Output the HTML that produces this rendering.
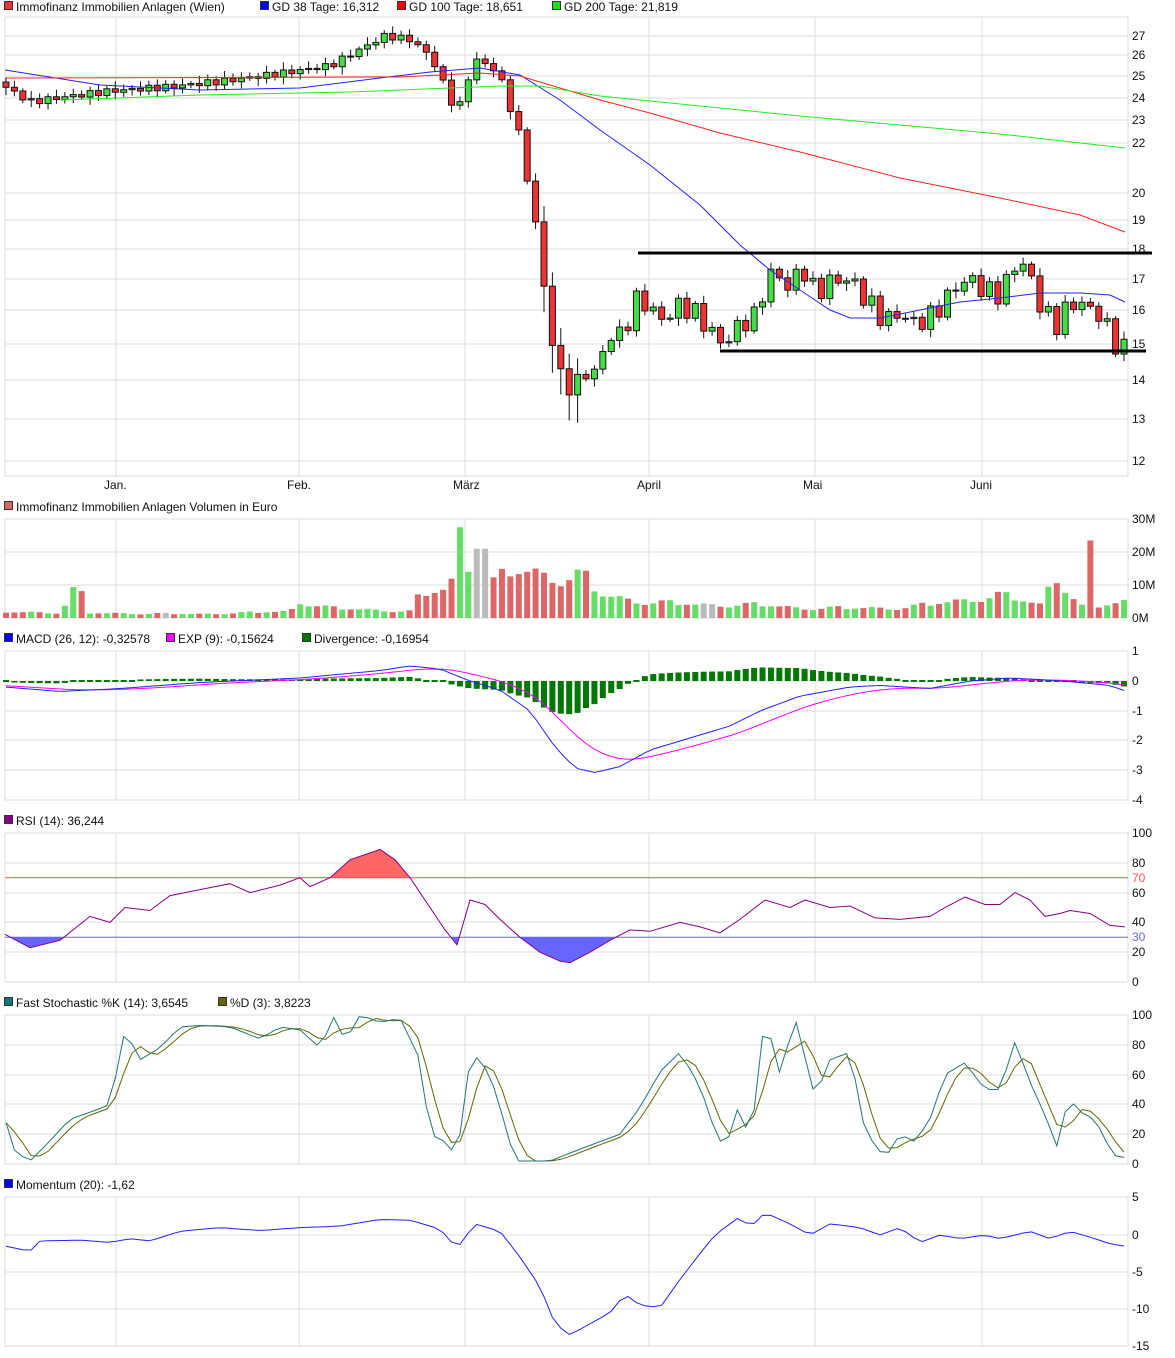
<!DOCTYPE html>
<html><head><meta charset="utf-8"><style>
body{margin:0;background:#fff;width:1175px;height:1358px;overflow:hidden;font-family:"Liberation Sans",sans-serif}
svg{display:block}
text{font-family:"Liberation Sans",sans-serif;font-size:12px;fill:#111}
</style></head><body>
<svg id="s" width="1175" height="1358" xmlns="http://www.w3.org/2000/svg"></svg>
<script>
var o=[];
function I(k,x){for(var i=0;i<k.length-1;i++){if(x<=k[i+1][0]){var a=k[i],b=k[i+1];return a[1]+(b[1]-a[1])*(x-a[0])/(b[0]-a[0]);}}return k[k.length-1][1];}
function L(x1,y1,x2,y2,c,w){o.push('<line x1="'+x1+'" y1="'+y1+'" x2="'+x2+'" y2="'+y2+'" stroke="'+c+'" stroke-width="'+(w||1)+'"/>');}
function R(x,y,w,h,f,s){o.push('<rect x="'+x+'" y="'+y+'" width="'+w+'" height="'+h+'" fill="'+f+'"'+(s?' stroke="'+s+'"':'')+'/>');}
function T(x,y,t,c,a){o.push('<text x="'+x+'" y="'+y+'"'+(c?' style="fill:'+c+'"':'')+'>'+t+'</text>');}
function P(pts,c,w){o.push('<polyline fill="none" stroke="'+c+'" stroke-width="'+(w||1)+'" points="'+pts.map(function(p){return p[0].toFixed(1)+','+p[1].toFixed(1)}).join(' ')+'"/>');}
function leg(items,y){var x=4;items.forEach(function(it){R(x+0.5,y-9.5,8,8,it[1],'#333');T(x+12,y,it[0]);x+=it[2];});}
var MX=[116,299,465,649,815,982],X0=5,X1=1128;
function panel(top,bot,ticks){R(X0,top,X1-X0,bot-top,'none','#ddd');ticks.forEach(function(t){L(X0,t[0],X1,t[0],'#ddd');T(1132,t[0]+4,t[1],t[2]);});MX.forEach(function(x){L(x,top,x,bot,'#ddd');});}
leg([['Immofinanz Immobilien Anlagen (Wien)','#e33',256],['GD 38 Tage: 16,312','#00f',137],['GD 100 Tage: 18,651','#f00',155],['GD 200 Tage: 21,819','#2d2',150]],11);
function py(p){return 1766-525*Math.log(p);}
var mt=[];[27,26,25,24,23,22,20,19,18,17,16,15,14,13,12].forEach(function(v){mt.push([Math.round(py(v)),v]);});
panel(17,476,mt);
[['Jan.',116],['Feb.',299],['März',465],['April',649],['Mai',815],['Juni',982]].forEach(function(m){T(m[1]-12,489,m[0]);});
var pk=[[5,24.5],[30,23.8],[60,24.0],[110,24.3],[170,24.5],[230,24.8],[290,25.2],[330,25.5],[360,26.3],[385,27.0],[410,26.8],[430,26.0],[445,24.5],[457,23.2],[465,24.5],[475,25.8],[490,25.5],[500,25.0],[508,23.8],[516,22.8],[522,22.0],[531,19.5],[540,18.3],[548,15.2],[557,14.8],[566,13.5],[574,14.0],[583,14.2],[590,14.0],[600,14.6],[608,15.2],[623,15.3],[632,16.0],[640,16.5],[650,16.0],[665,15.7],[680,16.2],[700,15.8],[715,15.2],[725,15.0],[740,15.6],[755,15.8],[765,16.8],[775,17.3],[790,16.6],[800,17.4],[808,17.1],[815,16.5],[830,16.9],[850,17.0],[862,16.5],[875,16.0],[885,15.7],[900,15.9],[915,15.6],[930,15.8],[945,16.3],[958,16.8],[970,17.0],[985,16.6],[1000,16.5],[1015,17.4],[1025,17.5],[1040,16.2],[1055,15.5],[1065,16.0],[1080,16.3],[1090,16.0],[1100,15.9],[1108,15.4],[1116,15.0],[1124,14.9]];
var N=134,sp=(1124-6)/(N-1),xs=[],cl=[];
for(var i=0;i<N;i++){var x=6+i*sp;xs.push(x);var amp=(x>600?0.02:0.006);cl.push(I(pk,x)*(1+amp*Math.sin(i*2.7)));}
var sd=[0.3,0.7,0.1,0.9,0.5,0.2,0.8,0.4,0.6,0.35];
var colors=[];
for(var i=0;i<N;i++){var op=i?cl[i-1]:cl[0]*1.01,c=cl[i],up=c>=op;colors.push(up);var hi=Math.max(op,c)*(1+0.004+0.012*sd[i%10]),lo=Math.min(op,c)*(1-0.004-0.012*sd[(i+3)%10]);
if(xs[i]>540&&xs[i]<580){lo*=0.96;hi*=1.02;}
L(xs[i],py(hi),xs[i],py(lo),'#111');var y1=py(Math.max(op,c)),y2=py(Math.min(op,c));R(xs[i]-3,y1,6,Math.max(1,y2-y1),up?'#4d4':'#e33','#111');}
P([[5,70],[100,85],[200,90],[300,88],[380,78],[430,72],[480,68],[520,75],[560,100],[600,130],[650,165],[700,205],[740,245],[770,270],[800,290],[830,310],[850,318],[880,318],[920,310],[960,302],[1000,298],[1040,293],[1080,293],[1110,295],[1125,302]],'#22f');
P([[5,78],[400,77],[480,73],[520,76],[560,88],[600,100],[650,113],[720,133],[800,152],[900,178],[1000,198],[1080,215],[1125,232]],'#f22');
P([[60,100],[200,95],[350,92],[500,86],[540,86],[600,96],[800,116],[1000,134],[1125,148]],'#2e2');
L(638,253,1152,253,'#000',3);L(720,351,1146,351,'#000',3);
leg([['Immofinanz Immobilien Anlagen Volumen in Euro','#d66',300]],511);
panel(519,618,[[519,'30M'],[552,'20M'],[585,'10M'],[618,'0M']]);
var vk=[[5,1.8],[60,1.6],[79,11],[85,1.5],[200,1.2],[290,2],[299,5],[330,3],[410,2],[420,7],[450,9],[455,15],[463,27.5],[470,13],[481,21],[490,10],[510,14],[530,14],[560,12],[583,13],[600,7],[640,5],[700,4],[760,4],[800,3],[900,3],[980,6],[1000,7],[1040,4],[1055,13],[1064,10],[1074,6],[1082,3.5],[1089,23.5],[1098,3.5],[1125,5]];
for(var i=0;i<N;i++){var v=I(vk,xs[i])*(0.75+0.5*sd[(i*7)%10]);if(Math.abs(xs[i]-463)<5)v=27.5;if(Math.abs(xs[i]-1089)<5)v=23.5;if(Math.abs(xs[i]-481)<5)v=21;var h=v*3.3;R(xs[i]-3,618-h,6,h,Math.abs(xs[i]-481)<5||Math.abs(xs[i]-163)<5||Math.abs(xs[i]-708)<5?'#bbb':(colors[i]?'#6d6':'#d66'));}
leg([['MACD (26, 12): -0,32578','#00f',162],['EXP (9): -0,15624','#f0f',136],['Divergence: -0,16954','#070',150]],643);
panel(651,800,[[651,'1'],[681,'0'],[711,'-1'],[740,'-2'],[770,'-3'],[800,'-4']]);
var mk=[[5,-0.2],[60,-0.35],[120,-0.25],[200,-0.05],[300,0.1],[380,0.35],[410,0.5],[440,0.4],[470,0.0],[500,-0.3],[530,-1.0],[555,-2.2],[575,-2.9],[595,-3.05],[620,-2.85],[650,-2.3],[690,-1.9],[730,-1.5],[760,-1.0],[800,-0.5],[850,-0.2],[880,-0.15],[930,-0.25],[970,0.0],[1010,0.1],[1040,0.05],[1080,-0.05],[1110,-0.15],[1125,-0.33]];
var m=[],s=[],e=-0.15;for(var i=0;i<N;i++){var v=I(mk,xs[i]);m.push(v);e=e+(v-e)*0.2;s.push(e);}
for(var i=0;i<N;i++){var d=(m[i]-s[i])*30,y=681;if(Math.abs(d)<1.5){R(xs[i]-3,680,6,2,'#070');}else R(xs[i]-3,d>0?y-d:y,6,Math.abs(d),'#070');}
P(xs.map(function(x,i){return [x,681-30*s[i]]}),'#f0f');
P(xs.map(function(x,i){return [x,681-30*m[i]]}),'#22f');
leg([['RSI (14): 36,244','#808',150]],825);
panel(833,982,[[833,'100'],[863,'80'],[893,'60'],[922,'40'],[952,'20'],[982,'0']]);
T(1132,882,'70','#f55');T(1132,941,'30','#66f');
var rk=[[5,32],[30,23],[60,28],[90,44],[110,40],[125,50],[150,48],[170,58],[200,62],[230,66],[250,60],[280,65],[300,70],[310,64],[330,70],[350,82],[380,89],[395,82],[410,70],[430,50],[445,35],[457,25],[470,55],[485,52],[500,42],[520,30],[540,20],[560,14],[570,13],[590,20],[610,28],[630,35],[650,34],[680,40],[700,37],[720,33],[740,42],[765,55],[790,50],[805,55],[830,50],[850,51],[875,43],[900,42],[930,44],[945,50],[965,57],[985,52],[1000,52],[1015,60],[1030,55],[1045,44],[1060,46],[1070,48],[1090,46],[1110,38],[1125,37]];
function ry(v){return 982-1.49*v;}
var up=[],dn=[];for(var x=5;x<=1125;x+=1){var v=I(rk,x);up.push([x,ry(Math.max(v,70))]);dn.push([x,ry(Math.min(v,30))]);}
o.push('<polygon fill="#f66" points="5,'+ry(70)+' '+up.map(function(p){return p[0]+','+p[1]}).join(' ')+' 1125,'+ry(70)+'"/>');
o.push('<polygon fill="#66f" points="5,'+ry(30)+' '+dn.map(function(p){return p[0]+','+p[1]}).join(' ')+' 1125,'+ry(30)+'"/>');
L(X0,ry(70),X1,ry(70),'#f55');L(X0,ry(30),X1,ry(30),'#66f');
P(rk.map(function(p){return [p[0],ry(p[1])]}),'#808');
leg([['Fast Stochastic %K (14): 3,6545','#177',214],['%D (3): 3,8223','#660',150]],1007);
panel(1015,1164,[[1015,'100'],[1045,'80'],[1075,'60'],[1104,'40'],[1134,'20'],[1164,'0']]);
var sk=[[5,30],[15,8],[30,2],[45,12],[70,30],[95,36],[110,40],[125,90],[140,70],[160,78],[180,92],[200,93],[230,92],[260,84],[280,92],[300,90],[320,78],[335,100],[345,82],[360,100],[380,95],[400,98],[420,70],[430,20],[445,15],[457,5],[470,70],[480,72],[495,50],[515,2],[530,2],[550,2],[580,10],[600,15],[620,20],[640,38],[660,62],[680,75],[700,52],[715,22],[725,10],[740,42],[750,12],[765,100],[780,60],[795,98],[815,45],[830,70],[850,75],[865,22],[885,4],[900,20],[915,15],[930,30],[945,60],[965,68],[985,50],[1000,50],[1015,82],[1030,55],[1045,33],[1058,10],[1068,45],[1080,35],[1095,30],[1110,10],[1120,2],[1125,5]];
var k=xs.map(function(x){return I(sk,x)});var dd=k.map(function(v,i){return (k[Math.max(0,i-2)]+k[Math.max(0,i-1)]+v)/3});
P(xs.map(function(x,i){return [x,1164-1.49*dd[i]]}),'#660');
P(xs.map(function(x,i){return [x,1164-1.49*k[i]]}),'#277');
leg([['Momentum (20): -1,62','#00f',150]],1189);
panel(1197,1346,[[1197,'5'],[1235,'0'],[1272,'-5'],[1309,'-10'],[1346,'-15']]);
var qk=[[5,-1.5],[30,-2.2],[40,-0.8],[80,-0.7],[110,-1],[130,-0.5],[150,-0.8],[180,0.5],[220,1],[260,0.6],[300,1],[340,1.2],[380,2.1],[410,2],[440,0.8],[457,-1.8],[475,1.5],[500,0.5],[520,-3],[540,-7],[555,-12],[570,-13.5],[590,-12],[610,-10.5],[625,-8],[640,-9.5],[660,-9.8],[680,-6],[700,-2.5],[715,0],[740,2.5],[750,1],[765,3],[790,1.5],[810,0],[830,1.5],[860,1],[880,0],[900,1],[920,-1],[940,0],[960,-0.5],[985,0],[1000,-0.5],[1030,0.5],[1050,-0.5],[1070,0.5],[1095,-0.5],[1110,-1.2],[1125,-1.5]];
P(xs.map(function(x){return [x,1235-7.4*I(qk,x)]}),'#22f');
document.getElementById('s').innerHTML=o.join('');
</script>
</body></html>
